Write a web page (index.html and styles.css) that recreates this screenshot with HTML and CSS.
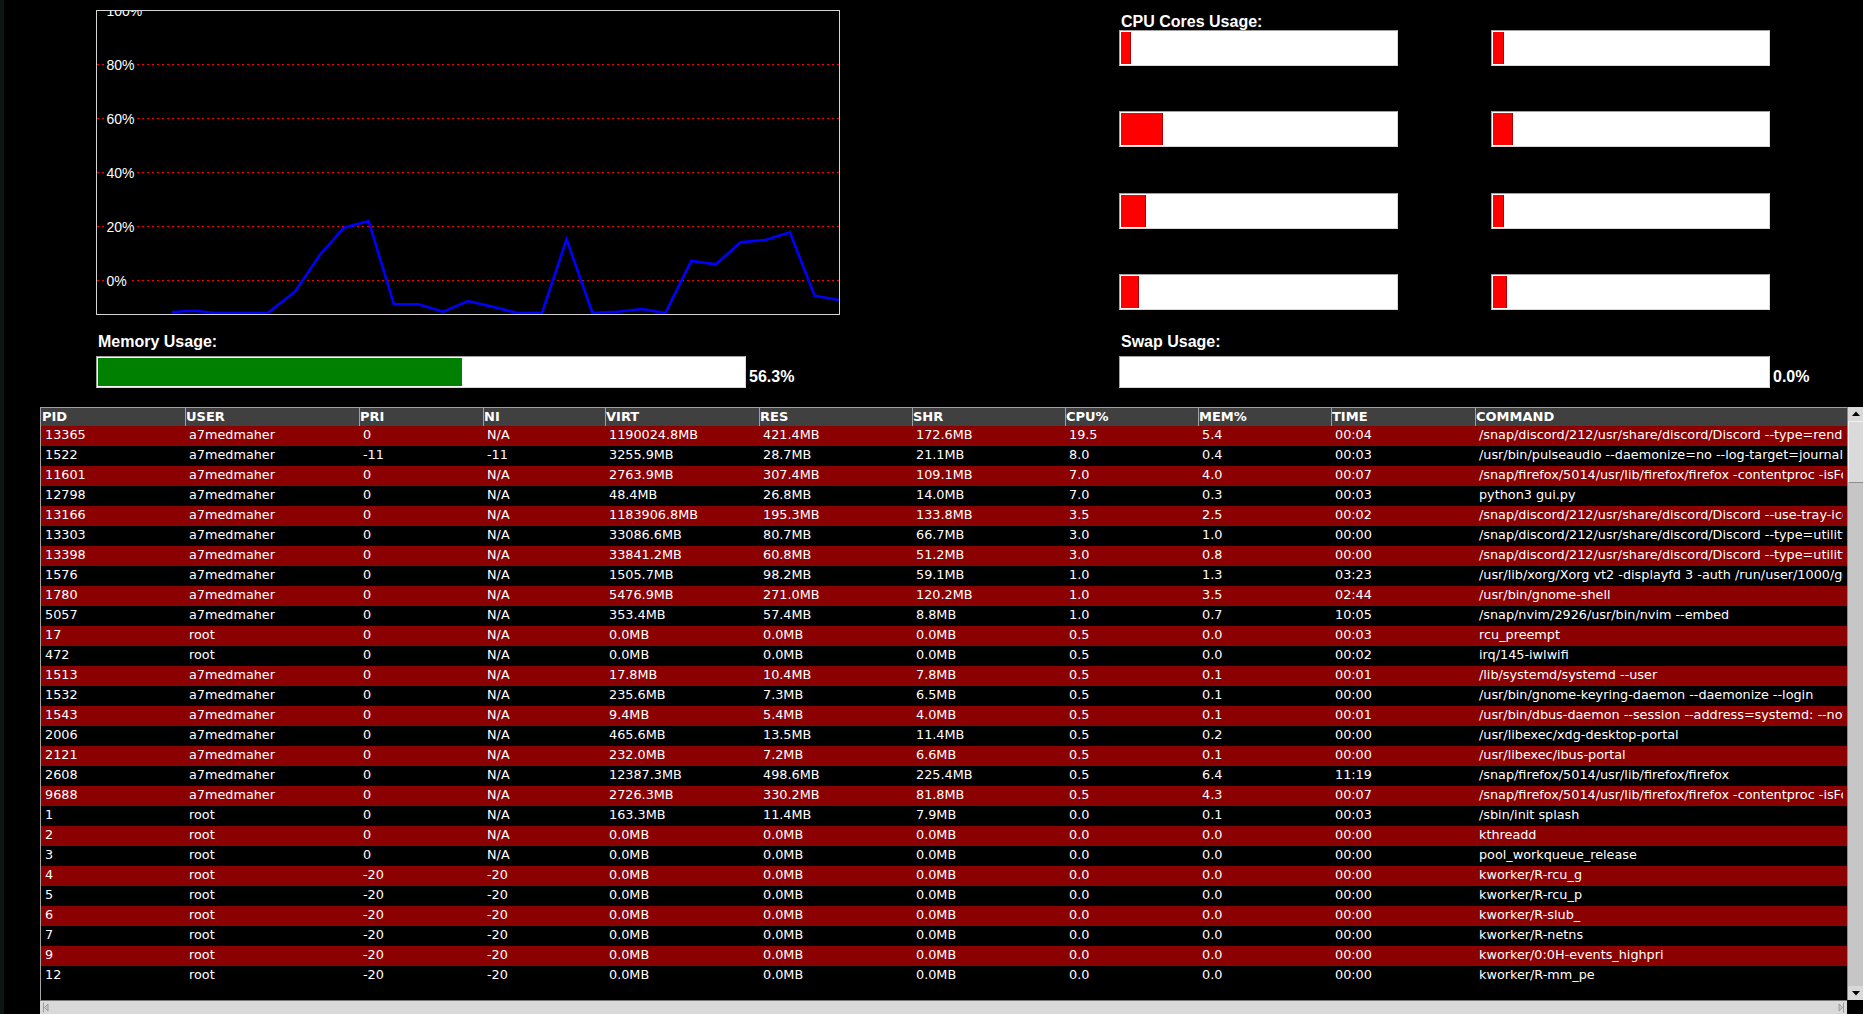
FILE: index.html
```html
<!DOCTYPE html>
<html>
<head>
<meta charset="utf-8">
<title>System Monitor</title>
<link rel="stylesheet" href="styles.css">
</head>
<body>
<div class="top">
  <div class="left-panel">
    <div class="chart">
      <svg width="742" height="303" viewBox="0 0 742 303">
        <g class="grid">
          <line x1="0" y1="-0.5" x2="742" y2="-0.5"/>
          <line x1="0" y1="53.5" x2="742" y2="53.5"/>
          <line x1="0" y1="107.5" x2="742" y2="107.5"/>
          <line x1="0" y1="161.5" x2="742" y2="161.5"/>
          <line x1="0" y1="215.5" x2="742" y2="215.5"/>
          <line x1="0" y1="269.5" x2="742" y2="269.5"/>
        </g>
        <g class="knock">
          <rect x="8" y="-8" width="40" height="14"/>
          <rect x="8" y="46" width="32" height="15"/>
          <rect x="8" y="100" width="32" height="15"/>
          <rect x="8" y="154" width="32" height="15"/>
          <rect x="8" y="208" width="32" height="15"/>
          <rect x="8" y="262" width="24" height="15"/>
        </g>
        <g class="ylabels">
          <text x="9.5" y="4.5">100%</text>
          <text x="9.5" y="58.5">80%</text>
          <text x="9.5" y="112.5">60%</text>
          <text x="9.5" y="166.5">40%</text>
          <text x="9.5" y="220.5">20%</text>
          <text x="9.5" y="274.5">0%</text>
        </g>
        <polyline class="cpu-line" points="74.7,301.3 89.5,300 100.5,300 117,302 170.7,302 198,280.7 222.8,244 247,216.7 271.6,210 296.9,293.3 321.5,293.3 346.2,300.7 370.9,290 395.6,295.7 420.3,302 445,302 469.6,228.3 495.4,302 520.1,300.7 544.8,298 568.4,302 594.2,250 618.9,253.3 643.5,231.3 668.2,229 692.9,221.3 717.6,284.7 742.3,289"/>
      </svg>
    </div>
    <div class="label">Memory Usage:</div>
    <div class="meter-row">
      <div class="meter"><div class="fill-green" style="width:56.3%"></div></div>
      <div class="pct">56.3%</div>
    </div>
  </div>
  <div class="right-panel">
    <div class="label">CPU Cores Usage:</div>
    <div class="cores">
      <div class="core"><div class="fill-red" style="width:3.6%"></div></div>
      <div class="core"><div class="fill-red" style="width:4%"></div></div>
      <div class="core"><div class="fill-red" style="width:15.3%"></div></div>
      <div class="core"><div class="fill-red" style="width:7.3%"></div></div>
      <div class="core"><div class="fill-red" style="width:9.1%"></div></div>
      <div class="core"><div class="fill-red" style="width:4%"></div></div>
      <div class="core"><div class="fill-red" style="width:6.5%"></div></div>
      <div class="core"><div class="fill-red" style="width:5.1%"></div></div>
    </div>
    <div class="label swap-label">Swap Usage:</div>
    <div class="meter-row">
      <div class="meter wide"><div class="fill-green" style="width:0%"></div></div>
      <div class="pct">0.0%</div>
    </div>
  </div>
</div>

<div class="table-area">
  <div class="table">
    <div class="thead">
      <span>PID</span><span>USER</span><span>PRI</span><span>NI</span><span>VIRT</span><span>RES</span><span>SHR</span><span>CPU%</span><span>MEM%</span><span>TIME</span><span>COMMAND</span>
    </div>
    <div class="tbody">
      <div class="tr"><span>13365</span><span>a7medmaher</span><span>0</span><span>N/A</span><span>1190024.8MB</span><span>421.4MB</span><span>172.6MB</span><span>19.5</span><span>5.4</span><span>00:04</span><span>/snap/discord/212/usr/share/discord/Discord --type=renderer --enable-crash-reporter</span></div>
      <div class="tr"><span>1522</span><span>a7medmaher</span><span>-11</span><span>-11</span><span>3255.9MB</span><span>28.7MB</span><span>21.1MB</span><span>8.0</span><span>0.4</span><span>00:03</span><span>/usr/bin/pulseaudio --daemonize=no --log-target=journal</span></div>
      <div class="tr"><span>11601</span><span>a7medmaher</span><span>0</span><span>N/A</span><span>2763.9MB</span><span>307.4MB</span><span>109.1MB</span><span>7.0</span><span>4.0</span><span>00:07</span><span>/snap/firefox/5014/usr/lib/firefox/firefox -contentproc -isForBrowser -prefsLen</span></div>
      <div class="tr"><span>12798</span><span>a7medmaher</span><span>0</span><span>N/A</span><span>48.4MB</span><span>26.8MB</span><span>14.0MB</span><span>7.0</span><span>0.3</span><span>00:03</span><span>python3 gui.py</span></div>
      <div class="tr"><span>13166</span><span>a7medmaher</span><span>0</span><span>N/A</span><span>1183906.8MB</span><span>195.3MB</span><span>133.8MB</span><span>3.5</span><span>2.5</span><span>00:02</span><span>/snap/discord/212/usr/share/discord/Discord --use-tray-icon</span></div>
      <div class="tr"><span>13303</span><span>a7medmaher</span><span>0</span><span>N/A</span><span>33086.6MB</span><span>80.7MB</span><span>66.7MB</span><span>3.0</span><span>1.0</span><span>00:00</span><span>/snap/discord/212/usr/share/discord/Discord --type=utility --utility-sub-type</span></div>
      <div class="tr"><span>13398</span><span>a7medmaher</span><span>0</span><span>N/A</span><span>33841.2MB</span><span>60.8MB</span><span>51.2MB</span><span>3.0</span><span>0.8</span><span>00:00</span><span>/snap/discord/212/usr/share/discord/Discord --type=utility --utility-sub-type</span></div>
      <div class="tr"><span>1576</span><span>a7medmaher</span><span>0</span><span>N/A</span><span>1505.7MB</span><span>98.2MB</span><span>59.1MB</span><span>1.0</span><span>1.3</span><span>03:23</span><span>/usr/lib/xorg/Xorg vt2 -displayfd 3 -auth /run/user/1000/gdm/Xauthority</span></div>
      <div class="tr"><span>1780</span><span>a7medmaher</span><span>0</span><span>N/A</span><span>5476.9MB</span><span>271.0MB</span><span>120.2MB</span><span>1.0</span><span>3.5</span><span>02:44</span><span>/usr/bin/gnome-shell</span></div>
      <div class="tr"><span>5057</span><span>a7medmaher</span><span>0</span><span>N/A</span><span>353.4MB</span><span>57.4MB</span><span>8.8MB</span><span>1.0</span><span>0.7</span><span>10:05</span><span>/snap/nvim/2926/usr/bin/nvim --embed</span></div>
      <div class="tr"><span>17</span><span>root</span><span>0</span><span>N/A</span><span>0.0MB</span><span>0.0MB</span><span>0.0MB</span><span>0.5</span><span>0.0</span><span>00:03</span><span>rcu_preempt</span></div>
      <div class="tr"><span>472</span><span>root</span><span>0</span><span>N/A</span><span>0.0MB</span><span>0.0MB</span><span>0.0MB</span><span>0.5</span><span>0.0</span><span>00:02</span><span>irq/145-iwlwifi</span></div>
      <div class="tr"><span>1513</span><span>a7medmaher</span><span>0</span><span>N/A</span><span>17.8MB</span><span>10.4MB</span><span>7.8MB</span><span>0.5</span><span>0.1</span><span>00:01</span><span>/lib/systemd/systemd --user</span></div>
      <div class="tr"><span>1532</span><span>a7medmaher</span><span>0</span><span>N/A</span><span>235.6MB</span><span>7.3MB</span><span>6.5MB</span><span>0.5</span><span>0.1</span><span>00:00</span><span>/usr/bin/gnome-keyring-daemon --daemonize --login</span></div>
      <div class="tr"><span>1543</span><span>a7medmaher</span><span>0</span><span>N/A</span><span>9.4MB</span><span>5.4MB</span><span>4.0MB</span><span>0.5</span><span>0.1</span><span>00:01</span><span>/usr/bin/dbus-daemon --session --address=systemd: --nofork --nopidfile</span></div>
      <div class="tr"><span>2006</span><span>a7medmaher</span><span>0</span><span>N/A</span><span>465.6MB</span><span>13.5MB</span><span>11.4MB</span><span>0.5</span><span>0.2</span><span>00:00</span><span>/usr/libexec/xdg-desktop-portal</span></div>
      <div class="tr"><span>2121</span><span>a7medmaher</span><span>0</span><span>N/A</span><span>232.0MB</span><span>7.2MB</span><span>6.6MB</span><span>0.5</span><span>0.1</span><span>00:00</span><span>/usr/libexec/ibus-portal</span></div>
      <div class="tr"><span>2608</span><span>a7medmaher</span><span>0</span><span>N/A</span><span>12387.3MB</span><span>498.6MB</span><span>225.4MB</span><span>0.5</span><span>6.4</span><span>11:19</span><span>/snap/firefox/5014/usr/lib/firefox/firefox</span></div>
      <div class="tr"><span>9688</span><span>a7medmaher</span><span>0</span><span>N/A</span><span>2726.3MB</span><span>330.2MB</span><span>81.8MB</span><span>0.5</span><span>4.3</span><span>00:07</span><span>/snap/firefox/5014/usr/lib/firefox/firefox -contentproc -isForBrowser -prefsLen</span></div>
      <div class="tr"><span>1</span><span>root</span><span>0</span><span>N/A</span><span>163.3MB</span><span>11.4MB</span><span>7.9MB</span><span>0.0</span><span>0.1</span><span>00:03</span><span>/sbin/init splash</span></div>
      <div class="tr"><span>2</span><span>root</span><span>0</span><span>N/A</span><span>0.0MB</span><span>0.0MB</span><span>0.0MB</span><span>0.0</span><span>0.0</span><span>00:00</span><span>kthreadd</span></div>
      <div class="tr"><span>3</span><span>root</span><span>0</span><span>N/A</span><span>0.0MB</span><span>0.0MB</span><span>0.0MB</span><span>0.0</span><span>0.0</span><span>00:00</span><span>pool_workqueue_release</span></div>
      <div class="tr"><span>4</span><span>root</span><span>-20</span><span>-20</span><span>0.0MB</span><span>0.0MB</span><span>0.0MB</span><span>0.0</span><span>0.0</span><span>00:00</span><span>kworker/R-rcu_g</span></div>
      <div class="tr"><span>5</span><span>root</span><span>-20</span><span>-20</span><span>0.0MB</span><span>0.0MB</span><span>0.0MB</span><span>0.0</span><span>0.0</span><span>00:00</span><span>kworker/R-rcu_p</span></div>
      <div class="tr"><span>6</span><span>root</span><span>-20</span><span>-20</span><span>0.0MB</span><span>0.0MB</span><span>0.0MB</span><span>0.0</span><span>0.0</span><span>00:00</span><span>kworker/R-slub_</span></div>
      <div class="tr"><span>7</span><span>root</span><span>-20</span><span>-20</span><span>0.0MB</span><span>0.0MB</span><span>0.0MB</span><span>0.0</span><span>0.0</span><span>00:00</span><span>kworker/R-netns</span></div>
      <div class="tr"><span>9</span><span>root</span><span>-20</span><span>-20</span><span>0.0MB</span><span>0.0MB</span><span>0.0MB</span><span>0.0</span><span>0.0</span><span>00:00</span><span>kworker/0:0H-events_highpri</span></div>
      <div class="tr"><span>12</span><span>root</span><span>-20</span><span>-20</span><span>0.0MB</span><span>0.0MB</span><span>0.0MB</span><span>0.0</span><span>0.0</span><span>00:00</span><span>kworker/R-mm_pe</span></div>
    </div>
  </div>
  <div class="vscroll">
    <div class="vbtn"><svg width="16" height="14" viewBox="0 0 16 14"><path d="M4 9 L8 4.5 L12 9 Z" fill="#000"/></svg></div>
    <div class="vthumb"></div>
    <div class="vtrack"></div>
    <div class="vbtn"><svg width="16" height="14" viewBox="0 0 16 14"><path d="M4 5 L8 9.5 L12 5 Z" fill="#000"/></svg></div>
  </div>
</div>
<div class="hscroll-row">
  <div class="hscroll">
    <div class="hbtn"><svg width="12" height="13" viewBox="0 0 12 13"><path d="M3.5 1.5 V11.5 M8 3 L4.5 6.5 L8 10 Z" stroke="#9a9a9a" fill="#c8c8c8" stroke-width="1"/></svg></div>
    <div class="htrack"></div>
    <div class="hbtn"><svg width="12" height="13" viewBox="0 0 12 13"><path d="M8.5 1.5 V11.5 M4 3 L7.5 6.5 L4 10 Z" stroke="#9a9a9a" fill="#c8c8c8" stroke-width="1"/></svg></div>
  </div>
  <div class="corner"></div>
</div>
</body>
</html>
```
FILE: styles.css
```css
* { box-sizing: border-box; }
html, body { margin: 0; padding: 0; }
body {
  width: 1863px;
  height: 1014px;
  overflow: hidden;
  background: linear-gradient(to right, #0e1613 0, #0e1613 4px, #000 4px);
  font-family: "Liberation Sans", Arial, sans-serif;
  color: #fff;
}

/* ---------- top area ---------- */
.top { display: flex; height: 407px; }
.left-panel { width: 1119px; padding-left: 96px; padding-top: 10px; }
.chart {
  width: 744px;
  height: 305px;
  border: 1px solid #d4d4d4;
  background: #000;
}
.chart svg { display: block; overflow: hidden; }
.grid line { stroke: #ff0000; stroke-width: 1.2; stroke-dasharray: 2 3; }
.knock rect { fill: #000; }
.ylabels text { fill: #fff; font-family: "Liberation Sans", Arial, sans-serif; font-size: 14px; }
.cpu-line { fill: none; stroke: #0000ff; stroke-width: 2.6; stroke-linejoin: miter; }

.label {
  font-weight: bold;
  font-size: 16px;
  line-height: 18px;
  height: 18px;
  padding-left: 2px;
  white-space: nowrap;
}
.left-panel .label { margin-top: 18px; }
.meter-row { display: flex; align-items: flex-end; margin-top: 5px; }
.meter {
  width: 650px;
  height: 32px;
  border: 1px solid;
  border-color: #a2a2a2 #d8d8d8 #d8d8d8 #a2a2a2;
  padding: 1px;
  background: #fff;
}
.meter.wide { width: 651px; }
.fill-green { height: 100%; background: #008000; }
.pct {
  font-weight: bold;
  font-size: 16px;
  line-height: 18px;
  margin-left: 3px;
  margin-bottom: 2px;
}

.right-panel { padding-top: 13px; }
.cores {
  display: grid;
  grid-template-columns: 279px 279px;
  column-gap: 93px;
  row-gap: 45.3px;
  margin-top: -1px;
}
.core {
  height: 36px;
  border: 1px solid;
  border-color: #a2a2a2 #d8d8d8 #d8d8d8 #a2a2a2;
  padding: 1px;
  background: #fff;
}
.fill-red { height: 100%; background: #ff0000; border-right: 1px solid #a80000; }
.right-panel .swap-label { margin-top: 23px; }

/* ---------- process table ---------- */
.table-area { display: flex; height: 593px; margin-left: 40px; }
.table {
  width: 1807px;
  border-left: 1px solid #a5a5a5;
  overflow: hidden;
  font-family: "DejaVu Sans", Verdana, sans-serif;
}
.thead, .tr {
  display: grid;
  grid-template-columns: 144px 174px 124px 122px 154px 153px 153px 133px 133px 144px 372px;
}
.thead {
  height: 19px;
  background: #404040;
  border-top: 1px solid #a0a0a0;
  font-weight: bold;
  font-size: 13px;
  line-height: 17px;
}
.thead span { border-left: 1px solid #a0a0a0; padding-left: 0; white-space: nowrap; overflow: hidden; }
.thead span:first-child { border-left: 0; padding-left: 1px; }
.tr {
  height: 20px;
  line-height: 18px;
  font-size: 12.8px;
  grid-template-columns: 144px 174px 124px 122px 154px 153px 153px 133px 133px 144px 368px;
}
.tbody .tr:nth-child(odd) { background: #8b0000; }
.tr span { padding-left: 4px; white-space: nowrap; overflow: hidden; }

.vscroll {
  width: 16px;
  background: #c6c6c6;
  display: flex;
  flex-direction: column;
  border-left: 1px solid #8a8a8a;
}
.vbtn { height: 14px; background: #d9d9d9; }
.vbtn svg { display: block; }
.vthumb {
  height: 62px;
  background: #dadada;
  border-top: 1px solid #f4f4f4;
  border-left: 1px solid #f4f4f4;
  border-bottom: 1px solid #8e8e8e;
}
.vtrack { flex: 1; }

.hscroll-row { display: flex; height: 14px; margin-left: 40px; }
.hscroll {
  width: 1807px;
  display: flex;
  background: #d9d9d9;
  border-top: 1px solid #7a7a7a;
}
.hbtn { width: 12px; }
.hbtn svg { display: block; }
.htrack { flex: 1; }
.corner { width: 16px; background: #000; }
```
